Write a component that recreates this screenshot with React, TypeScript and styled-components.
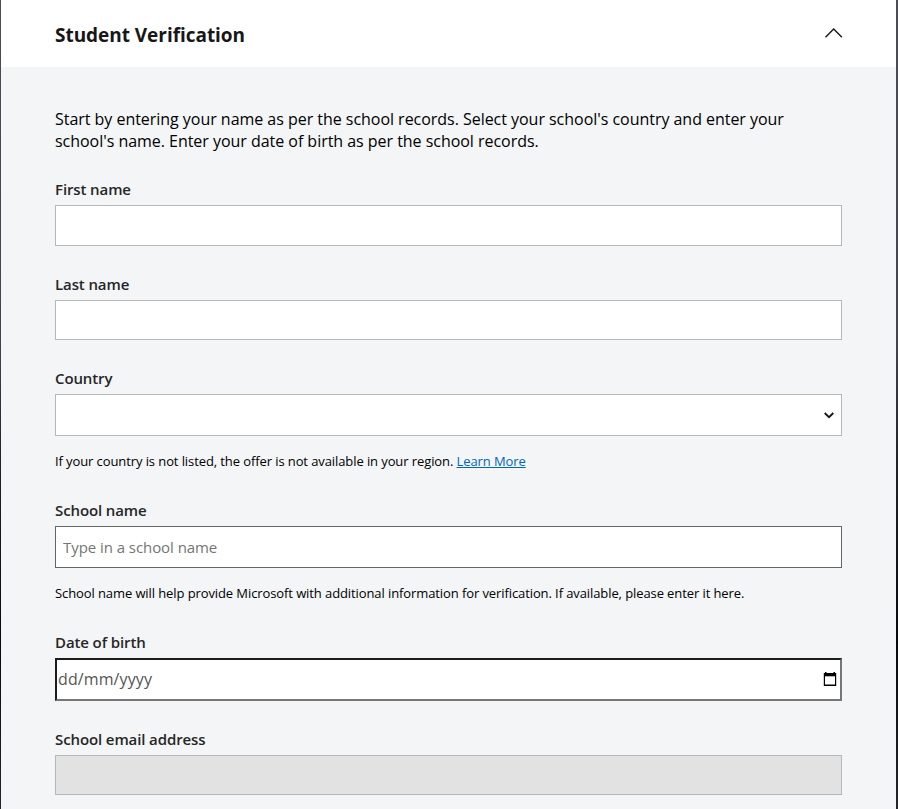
import React from "react";
import styled, { createGlobalStyle } from "styled-components";

const GlobalStyle = createGlobalStyle`
  * { box-sizing: border-box; }
  body {
    margin: 0;
    overflow: hidden;
    font-family: "Open Sans", "Noto Sans", sans-serif;
    color: #000;
  }
`;

const Frame = styled.div`
  display: flex;
  width: 898px;
  height: 809px;
  overflow: hidden;
  padding: 0 2px 0 1px;
  background: linear-gradient(#4c4b58 0, #44434f 340px, #22222b 460px, #08080f 640px, #24252b 809px);
`;

const Panel = styled.main`
  flex: 1;
  background: #f3f5f7;
`;

const Header = styled.header`
  display: flex;
  align-items: center;
  justify-content: space-between;
  height: 67px;
  padding: 0 52px 0 54px;
  background: #fff;
`;

const Title = styled.h1`
  margin: 3px 0 0;
  font-size: 19px;
  line-height: 28px;
  font-weight: 700;
  letter-spacing: -0.04px;
  color: #171717;
`;

const Toggle = styled.button`
  display: flex;
  padding: 0 0 1px;
  border: 0;
  background: none;
  color: #171717;
`;

const Form = styled.form`
  display: flex;
  flex-direction: column;
  padding: 41px 54px 0;
`;

const Intro = styled.p`
  margin: 0 0 26px;
  font-size: 16px;
  line-height: 22px;
  letter-spacing: -0.032px;
  white-space: nowrap;
`;

const Field = styled.div`
  display: flex;
  flex-direction: column;
  margin-bottom: 27px;
`;

const Label = styled.label`
  height: 22px;
  margin-bottom: 5px;
  font-size: 15px;
  line-height: 22px;
  font-weight: 600;
  letter-spacing: -0.11px;
  color: #262626;
`;

const Box = styled.div<{ $height: number; $tone?: "strong" | "disabled" }>`
  display: flex;
  align-items: center;
  justify-content: space-between;
  height: ${(p) => p.$height}px;
  width: 787px;
  padding: 0 7px;
  border: 1px solid ${(p) => (p.$tone === "strong" ? "#666" : "#b5b7ba")};
  background: ${(p) => (p.$tone === "disabled" ? "#e2e2e2" : "#fff")};
`;

const DateBox = styled(Box)`
  padding: 0 3px 0 1px;
  border: 2px solid;
  border-color: #1c1c1e #767676 #767676 #1c1c1e;
`;

const TextInput = styled.input`
  flex: 1;
  min-width: 0;
  padding: 0;
  border: 0;
  outline: 0;
  background: transparent;
  font: 400 15px/22px "Open Sans", "Noto Sans", sans-serif;
  letter-spacing: -0.06px;
  &::placeholder { color: #757575; opacity: 1; }
`;

const DateText = styled.span`
  padding-bottom: 2px;
  font-size: 16px;
  line-height: 22px;
  letter-spacing: 0.1px;
  color: #555;
`;

const Help = styled.p`
  margin: 15px 0 1px;
  font-size: 13px;
  line-height: 20px;
  letter-spacing: -0.095px;
  white-space: nowrap;
`;

const Link = styled.a`
  color: #0067b8;
  text-decoration: underline;
`;

const CollapseIcon = () => (
  <svg width="20" height="12" viewBox="0 0 20 12" fill="none">
    <path d="M1.5 10.2 9.7 2l8.2 8.2" stroke="currentColor" strokeWidth="1.4" />
  </svg>
);

const SelectArrow = () => (
  <svg width="10" height="7" viewBox="0 0 10 7" fill="none">
    <path d="M.7 1 5 5.2 9.3 1" stroke="#171717" strokeWidth="1.9" />
  </svg>
);

const CalendarIcon = () => (
  <svg width="14" height="15" viewBox="0 0 14 15">
    <path d="M2 0h1.5v1h7V0H12v1h1.2v13H.8V1H2Z" fill="#000" />
    <path d="M2 4.3h10v8.2H2Z" fill="#fff" />
  </svg>
);

export default function App() {
  return (
    <>
      <GlobalStyle />
      <Frame>
        <Panel>
          <Header>
            <Title>Student Verification</Title>
            <Toggle aria-label="Collapse section"><CollapseIcon /></Toggle>
          </Header>
          <Form>
            <Intro>
              Start by entering your name as per the school records. Select your school's country and enter your
              <br />
              school's name. Enter your date of birth as per the school records.
            </Intro>
            <Field>
              <Label htmlFor="first">First name</Label>
              <Box $height={41}><TextInput id="first" /></Box>
            </Field>
            <Field>
              <Label htmlFor="last">Last name</Label>
              <Box $height={40}><TextInput id="last" /></Box>
            </Field>
            <Field>
              <Label>Country</Label>
              <Box $height={42} role="combobox"><span /><SelectArrow /></Box>
              <Help>
                If your country is not listed, the offer is not available in your region. <Link href="#">Learn More</Link>
              </Help>
            </Field>
            <Field>
              <Label htmlFor="school">School name</Label>
              <Box $height={42} $tone="strong"><TextInput id="school" placeholder="Type in a school name" /></Box>
              <Help>
                School name will help provide Microsoft with additional information for verification. If available, please enter it here.
              </Help>
            </Field>
            <Field>
              <Label>Date of birth</Label>
              <DateBox $height={43}><DateText>dd/mm/yyyy</DateText><CalendarIcon /></DateBox>
            </Field>
            <Field>
              <Label htmlFor="email">School email address</Label>
              <Box $height={40} $tone="disabled"><TextInput id="email" disabled /></Box>
            </Field>
          </Form>
        </Panel>
      </Frame>
    </>
  );
}
